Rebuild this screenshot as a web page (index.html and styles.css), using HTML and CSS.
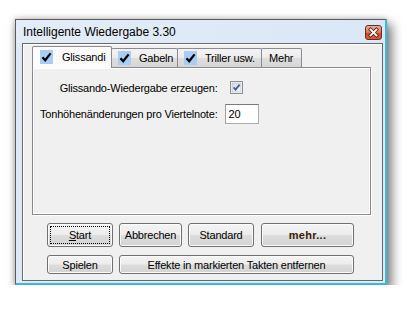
FILE: index.html
```html
<!DOCTYPE html>
<html>
<head>
<meta charset="utf-8">
<link rel="stylesheet" href="styles.css">
</head>
<body>
<div class="window">
  <div class="titlebar">
    <span class="title">Intelligente Wiedergabe 3.30</span>
    <span class="close">
      <svg width="17" height="15" viewBox="0 0 17 15">
        <defs>
          <linearGradient id="cg" x1="0" y1="0" x2="0" y2="1">
            <stop offset="0" stop-color="#eab3a2"/>
            <stop offset="0.5" stop-color="#d8765b"/>
            <stop offset="0.55" stop-color="#c8482a"/>
            <stop offset="1" stop-color="#d9623e"/>
          </linearGradient>
        </defs>
        <rect x="0.5" y="0.5" width="16" height="14" rx="2.5" fill="url(#cg)" stroke="#6e2a1c"/>
        <path d="M5.5 4.5 L11.5 10.5 M11.5 4.5 L5.5 10.5" stroke="#5a1e12" stroke-width="3.4" stroke-linecap="square"/>
        <path d="M5.5 4.5 L11.5 10.5 M11.5 4.5 L5.5 10.5" stroke="#ffffff" stroke-width="1.8" stroke-linecap="square"/>
      </svg>
    </span>
  </div>
  <div class="client">
    <div class="tabs">
      <div class="tab active t1"><span class="tick"><svg width="13" height="14" viewBox="0 0 13 14"><rect width="13" height="14" fill="#a9cdf4"/><path d="M2.5 7.2 L5.2 10.2 L10.6 3.4" fill="none" stroke="#000" stroke-width="2.3"/></svg></span><span>Glissandi</span></div>
      <div class="tab t2"><span class="tick"><svg width="13" height="14" viewBox="0 0 13 14"><rect width="13" height="14" fill="#a9cdf4"/><path d="M2.5 7.2 L5.2 10.2 L10.6 3.4" fill="none" stroke="#000" stroke-width="2.3"/></svg></span><span>Gabeln</span></div>
      <div class="tab t3"><span class="tick"><svg width="13" height="14" viewBox="0 0 13 14"><rect width="13" height="14" fill="#a9cdf4"/><path d="M2.5 7.2 L5.2 10.2 L10.6 3.4" fill="none" stroke="#000" stroke-width="2.3"/></svg></span><span>Triller usw.</span></div>
      <div class="tab t4"><span>Mehr</span></div>
    </div>
    <div class="panel">
      <div class="form">
        <span class="lbl">Glissando-Wiedergabe erzeugen:</span>
        <span class="check">
          <svg width="13" height="13" viewBox="0 0 13 13">
            <defs>
              <linearGradient id="kg" x1="0" y1="0" x2="1" y2="1">
                <stop offset="0" stop-color="#d4dbe6"/>
                <stop offset="1" stop-color="#f6f7f9"/>
              </linearGradient>
            </defs>
            <rect x="0.5" y="0.5" width="12" height="12" fill="#fdfdfd" stroke="#8e8f8f"/>
            <rect x="2" y="2" width="9" height="9" fill="url(#kg)" stroke="#b0b8c8" stroke-width="0.6"/>
            <path d="M3.6 6.4 L5.6 8.6 L9.6 3.6" fill="none" stroke="#3f5b94" stroke-width="1.7"/>
          </svg>
        </span>
        <span class="lbl">Tonhöhenänderungen pro Viertelnote:</span>
        <span class="input">20</span>
      </div>
    </div>
    <div class="btnrow row1">
      <span class="btn w65 focus"><span class="fr"><u>S</u>tart</span></span>
      <span class="btn w62">Abbrechen</span>
      <span class="btn w65">Standard</span>
      <span class="btn w92 bold">mehr...</span>
    </div>
    <div class="btnrow row2">
      <span class="btn w65">Spielen</span>
      <span class="btn w234">Effekte in markierten Takten entfernen</span>
    </div>
  </div>
</div>
</body>
</html>
```

FILE: styles.css
```css
html, body {
  margin: 0;
  padding: 0;
  background: #ffffff;
}
body {
  font-family: "Liberation Sans", Arial, sans-serif;
  font-size: 11px;
  letter-spacing: -0.2px;
  color: #000;
}
.window {
  box-sizing: border-box;
  margin: 19px 0 0 15px;
  width: 372px;
  height: 266px;
  border-left: 1px solid #5c5c5c;
  border-top: 1px solid #5c5c5c;
  border-right: 2px solid #3cb8dc;
  border-bottom: 2px solid #3cb8dc;
  background: #dde9f6;
  padding: 0 2px 2px 6px;
  display: flex;
  flex-direction: column;
  box-shadow: 4px 6px 10px 1px rgba(0,0,0,0.5), -1px -1px 5px rgba(0,0,0,0.18);
}
.titlebar {
  height: 23px;
  display: flex;
  align-items: center;
  justify-content: space-between;
  background: linear-gradient(90deg, #e3edf9 0%, #dae7f6 100%);
  margin-left: -6px;
  margin-right: -2px;
  padding-left: 7px;
  padding-right: 3px;
}
.title {
  font-size: 12px;
  letter-spacing: 0;
  padding-top: 1px;
}
.close {
  display: block;
  width: 17px;
  height: 15px;
  margin-top: 2px;
}
.close svg { display: block; }
.client {
  flex: 1;
  border: 1px solid #696969;
  background: #f0f0f0;
  box-shadow: inset 1px 1px 0 #ffffff;
  padding: 2px 11px 0 9px;
  display: flex;
  flex-direction: column;
}
.tabs {
  display: flex;
  align-items: flex-end;
  height: 21px;
  position: relative;
  z-index: 1;
}
.tab {
  box-sizing: border-box;
  height: 19px;
  border: 1px solid #898c95;
  border-bottom: none;
  border-radius: 2px 2px 0 0;
  background: linear-gradient(#f3f3f3 0%, #ececec 50%, #dedede 51%, #d6d6d6 100%);
  display: flex;
  align-items: center;
  gap: 8px;
  padding-left: 6px;
  white-space: nowrap;
  margin-left: -1px;
}
.tab .tick { display: block; width: 13px; height: 14px; }
.tab .tick svg { display: block; }
.tab.active {
  height: 22px;
  margin-bottom: -1px;
  background: #fcfcfc;
  margin-left: 0;
  padding-left: 7px;
  gap: 9px;
  padding-bottom: 2px;
  position: relative;
  z-index: 2;
}
.t1 { width: 80px; }
.t2 { width: 67px; }
.t3 { width: 85px; }
.t4 { width: 41px; padding-left: 7px; }
.panel {
  box-sizing: border-box;
  height: 148px;
  border: 1px solid #898c95;
  background: #f0f0f0;
  box-shadow: inset 0 0 0 1px #ffffff, 1px 1px 0 #ffffff;
  padding: 13px 0 0 7px;
}
.form {
  display: grid;
  grid-template-columns: max-content max-content;
  column-gap: 7px;
  row-gap: 10px;
  align-items: center;
}
.lbl { text-align: right; }
.check {
  display: block;
  width: 13px;
  height: 13px;
  margin-left: 5px;
}
.check svg { display: block; }
.input {
  box-sizing: border-box;
  width: 34px;
  height: 20px;
  background: #fff;
  border: 1px solid #abadb3;
  border-top-color: #7a7a7a;
  border-left-color: #a0a0a0;
  padding: 2px 0 0 3px;
  line-height: 14px;
}
.btnrow {
  display: flex;
  gap: 6px;
  margin-left: 15px;
}
.row1 { margin-top: 8px; }
.row2 { margin-top: 8px; }
.btn {
  box-sizing: border-box;
  height: 24px;
  border: 1px solid #707070;
  border-radius: 3px;
  background: linear-gradient(#f4f4f4 0%, #ececec 48%, #dddddd 52%, #d3d3d3 100%);
  box-shadow: inset 0 0 0 1px #fbfbfb;
  display: flex;
  align-items: center;
  justify-content: center;
  white-space: nowrap;
}
.row2 .btn { height: 19px; }
.w65 { width: 66px; }
.w62 { width: 63px; }
.w92 { width: 93px; margin-left: 1px; }
.w234 { width: 235px; }
.bold { font-weight: bold; color: #3a1a08; letter-spacing: 0.3px; }
.focus { padding: 3px; }
.focus .fr {
  box-sizing: border-box;
  width: 100%;
  height: 100%;
  outline: 1px dotted #000;
  display: flex;
  align-items: center;
  justify-content: center;
}
```
